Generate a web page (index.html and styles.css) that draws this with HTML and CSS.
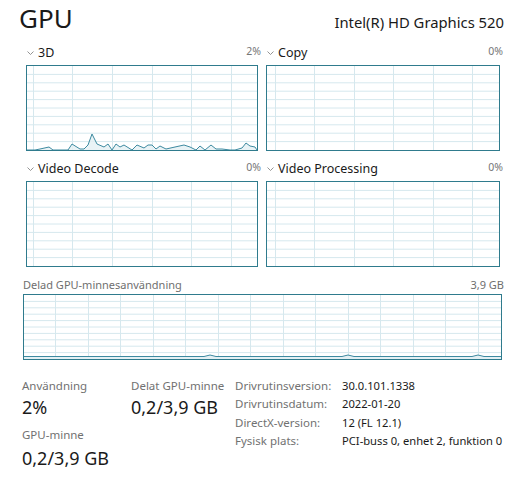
FILE: index.html
```html
<!DOCTYPE html>
<html lang="sv">
<head>
<meta charset="utf-8">
<title>GPU</title>
<link rel="stylesheet" href="styles.css">
</head>
<body>
<div class="page">
  <header class="top">
    <h1 class="title">GPU</h1>
    <div class="model">Intel(R) HD Graphics 520</div>
  </header>

  <section class="engines">
    <div class="panel">
      <div class="phead">
        <span class="pname"><svg class="chev" width="7" height="4" viewBox="0 0 7 4"><polyline points="0.5,0.5 3.5,3.5 6.5,0.5" fill="none" stroke="#888" stroke-width="0.9"/></svg>3D</span>
        <span class="pct">2%</span>
      </div>
      <div class="chart w232">
        <svg width="230" height="84" viewBox="0 0 230 84">
          <g stroke="#d6e8ee" stroke-width="1">
            <line x1="0" y1="8.4" x2="230" y2="8.4"/><line x1="0" y1="16.8" x2="230" y2="16.8"/><line x1="0" y1="25.2" x2="230" y2="25.2"/><line x1="0" y1="33.6" x2="230" y2="33.6"/><line x1="0" y1="42" x2="230" y2="42"/><line x1="0" y1="50.4" x2="230" y2="50.4"/><line x1="0" y1="58.8" x2="230" y2="58.8"/><line x1="0" y1="67.2" x2="230" y2="67.2"/><line x1="0" y1="75.6" x2="230" y2="75.6"/>
            <line x1="6.5" y1="0" x2="6.5" y2="84"/><line x1="45.5" y1="0" x2="45.5" y2="84"/><line x1="85.5" y1="0" x2="85.5" y2="84"/><line x1="125.5" y1="0" x2="125.5" y2="84"/><line x1="164.5" y1="0" x2="164.5" y2="84"/><line x1="204.5" y1="0" x2="204.5" y2="84"/>
          </g>
          <polygon fill="#e3f0f4" fill-opacity="0.8" points="0,84 8,84 13,83 22,81 26,84 41,84 45,78 53,83 57,83 61,79 65,68 70,78 77,81 81,78 85,84 89,78 93,81 97,79 105,84 110,79 117,82 121,79 125,79 129,83 133,80 139,83 148,81 157,79 163,81 169,84 173,80 178,84 184,79 189,83 195,83 203,84 208,84 215,82 219,77 223,80 228,81 230,84"/>
          <polyline fill="none" stroke="#3d8aa0" stroke-width="1" points="0,84 8,84 13,83 22,81 26,84 41,84 45,78 53,83 57,83 61,79 65,68 70,78 77,81 81,78 85,84 89,78 93,81 97,79 105,84 110,79 117,82 121,79 125,79 129,83 133,80 139,83 148,81 157,79 163,81 169,84 173,80 178,84 184,79 189,83 195,83 203,84 208,84 215,82 219,77 223,80 228,81 230,84"/>
        </svg>
      </div>
    </div>

    <div class="panel">
      <div class="phead">
        <span class="pname"><svg class="chev" width="7" height="4" viewBox="0 0 7 4"><polyline points="0.5,0.5 3.5,3.5 6.5,0.5" fill="none" stroke="#888" stroke-width="0.9"/></svg>Copy</span>
        <span class="pct">0%</span>
      </div>
      <div class="chart w234">
        <svg width="232" height="84" viewBox="0 0 232 84">
          <g stroke="#d6e8ee" stroke-width="1">
            <line x1="0" y1="8.4" x2="232" y2="8.4"/><line x1="0" y1="16.8" x2="232" y2="16.8"/><line x1="0" y1="25.2" x2="232" y2="25.2"/><line x1="0" y1="33.6" x2="232" y2="33.6"/><line x1="0" y1="42" x2="232" y2="42"/><line x1="0" y1="50.4" x2="232" y2="50.4"/><line x1="0" y1="58.8" x2="232" y2="58.8"/><line x1="0" y1="67.2" x2="232" y2="67.2"/><line x1="0" y1="75.6" x2="232" y2="75.6"/>
            <line x1="8.5" y1="0" x2="8.5" y2="84"/><line x1="47.5" y1="0" x2="47.5" y2="84"/><line x1="87.5" y1="0" x2="87.5" y2="84"/><line x1="126.5" y1="0" x2="126.5" y2="84"/><line x1="166.5" y1="0" x2="166.5" y2="84"/><line x1="205.5" y1="0" x2="205.5" y2="84"/>
          </g>
        </svg>
      </div>
    </div>

    <div class="panel">
      <div class="phead">
        <span class="pname"><svg class="chev" width="7" height="4" viewBox="0 0 7 4"><polyline points="0.5,0.5 3.5,3.5 6.5,0.5" fill="none" stroke="#888" stroke-width="0.9"/></svg>Video Decode</span>
        <span class="pct">0%</span>
      </div>
      <div class="chart w232">
        <svg width="230" height="84" viewBox="0 0 230 84">
          <g stroke="#d6e8ee" stroke-width="1">
            <line x1="0" y1="8.4" x2="230" y2="8.4"/><line x1="0" y1="16.8" x2="230" y2="16.8"/><line x1="0" y1="25.2" x2="230" y2="25.2"/><line x1="0" y1="33.6" x2="230" y2="33.6"/><line x1="0" y1="42" x2="230" y2="42"/><line x1="0" y1="50.4" x2="230" y2="50.4"/><line x1="0" y1="58.8" x2="230" y2="58.8"/><line x1="0" y1="67.2" x2="230" y2="67.2"/><line x1="0" y1="75.6" x2="230" y2="75.6"/>
            <line x1="6.5" y1="0" x2="6.5" y2="84"/><line x1="45.5" y1="0" x2="45.5" y2="84"/><line x1="85.5" y1="0" x2="85.5" y2="84"/><line x1="125.5" y1="0" x2="125.5" y2="84"/><line x1="164.5" y1="0" x2="164.5" y2="84"/><line x1="204.5" y1="0" x2="204.5" y2="84"/>
          </g>
        </svg>
      </div>
    </div>

    <div class="panel">
      <div class="phead">
        <span class="pname"><svg class="chev" width="7" height="4" viewBox="0 0 7 4"><polyline points="0.5,0.5 3.5,3.5 6.5,0.5" fill="none" stroke="#888" stroke-width="0.9"/></svg>Video Processing</span>
        <span class="pct">0%</span>
      </div>
      <div class="chart w234">
        <svg width="232" height="84" viewBox="0 0 232 84">
          <g stroke="#d6e8ee" stroke-width="1">
            <line x1="0" y1="8.4" x2="232" y2="8.4"/><line x1="0" y1="16.8" x2="232" y2="16.8"/><line x1="0" y1="25.2" x2="232" y2="25.2"/><line x1="0" y1="33.6" x2="232" y2="33.6"/><line x1="0" y1="42" x2="232" y2="42"/><line x1="0" y1="50.4" x2="232" y2="50.4"/><line x1="0" y1="58.8" x2="232" y2="58.8"/><line x1="0" y1="67.2" x2="232" y2="67.2"/><line x1="0" y1="75.6" x2="232" y2="75.6"/>
            <line x1="8.5" y1="0" x2="8.5" y2="84"/><line x1="47.5" y1="0" x2="47.5" y2="84"/><line x1="87.5" y1="0" x2="87.5" y2="84"/><line x1="126.5" y1="0" x2="126.5" y2="84"/><line x1="166.5" y1="0" x2="166.5" y2="84"/><line x1="205.5" y1="0" x2="205.5" y2="84"/>
          </g>
        </svg>
      </div>
    </div>
  </section>

  <section class="shared">
    <div class="shead">
      <span>Delad GPU-minnesanvändning</span>
      <span>3,9 GB</span>
    </div>
    <div class="chart w479">
      <svg width="477" height="64" viewBox="0 0 477 64">
        <g stroke="#d6e8ee" stroke-width="1">
          <line x1="0" y1="6.4" x2="477" y2="6.4"/><line x1="0" y1="12.8" x2="477" y2="12.8"/><line x1="0" y1="19.2" x2="477" y2="19.2"/><line x1="0" y1="25.6" x2="477" y2="25.6"/><line x1="0" y1="32" x2="477" y2="32"/><line x1="0" y1="38.4" x2="477" y2="38.4"/><line x1="0" y1="44.8" x2="477" y2="44.8"/><line x1="0" y1="51.2" x2="477" y2="51.2"/><line x1="0" y1="57.6" x2="477" y2="57.6"/>
          <line x1="31.5" y1="0" x2="31.5" y2="64"/><line x1="64.5" y1="0" x2="64.5" y2="64"/><line x1="96.5" y1="0" x2="96.5" y2="64"/><line x1="129.5" y1="0" x2="129.5" y2="64"/><line x1="161.5" y1="0" x2="161.5" y2="64"/><line x1="194.5" y1="0" x2="194.5" y2="64"/><line x1="226.5" y1="0" x2="226.5" y2="64"/><line x1="259.5" y1="0" x2="259.5" y2="64"/><line x1="291.5" y1="0" x2="291.5" y2="64"/><line x1="324.5" y1="0" x2="324.5" y2="64"/><line x1="356.5" y1="0" x2="356.5" y2="64"/><line x1="389.5" y1="0" x2="389.5" y2="64"/><line x1="421.5" y1="0" x2="421.5" y2="64"/><line x1="454.5" y1="0" x2="454.5" y2="64"/>
        </g>
        <polygon fill="#e3f0f4" points="0,61.5 180,61.5 186,60 192,61.5 318,61.5 324,60 330,61.5 448,61.5 454,60 460,61.5 477,61.5 477,64 0,64"/>
        <polyline fill="none" stroke="#3d8aa0" stroke-width="1" points="0,61.5 180,61.5 186,60 192,61.5 318,61.5 324,60 330,61.5 448,61.5 454,60 460,61.5 477,61.5"/>
      </svg>
    </div>
  </section>

  <section class="stats">
    <div class="col">
      <div class="slabel">Användning</div>
      <div class="sval">2%</div>
      <div class="slabel second">GPU-minne</div>
      <div class="sval second">0,2/3,9 GB</div>
    </div>
    <div class="col">
      <div class="slabel">Delat GPU-minne</div>
      <div class="sval">0,2/3,9 GB</div>
    </div>
    <dl class="info">
      <dt>Drivrutinsversion:</dt><dd>30.0.101.1338</dd>
      <dt>Drivrutinsdatum:</dt><dd>2022-01-20</dd>
      <dt>DirectX-version:</dt><dd>12 (FL 12.1)</dd>
      <dt>Fysisk plats:</dt><dd>PCI-buss 0, enhet 2, funktion 0</dd>
    </dl>
  </section>
</div>
</body>
</html>
```
FILE: styles.css
```css
* { box-sizing: border-box; }
html, body { margin: 0; padding: 0; background: #ffffff; }
body {
  font-family: "Noto Sans", "Open Sans", sans-serif;
  color: #1a1a1a;
  width: 519px;
  height: 486px;
  overflow: hidden;
}
.page { padding: 0; }

.top {
  height: 43px;
  display: flex;
  justify-content: space-between;
  align-items: baseline;
  padding: 3px 15px 0 19px;
}
.title {
  margin: 0;
  font-size: 26px;
  font-weight: 400;
  line-height: 30px;
}
.model {
  font-size: 14.8px;
  line-height: 20px;
}

.engines {
  display: grid;
  grid-template-columns: 232px 234px;
  column-gap: 8px;
  row-gap: 8px;
  margin-left: 26px;
}
.panel { display: flex; flex-direction: column; }
.phead {
  height: 16px;
  margin-bottom: 6px;
  margin-right: -3px;
  display: flex;
  justify-content: space-between;
  align-items: baseline;
  line-height: 16px;
}
.pname { font-size: 12.5px; display: flex; align-items: center; }
.chev { margin: 0 4px 0 1px; }
.pct { font-size: 10.5px; color: #767676; }

.chart {
  border: 1px solid #2f7b8d;
  background: #fff;
  line-height: 0;
}
.chart svg { display: block; }
.w232 { width: 232px; height: 86px; }
.w234 { width: 234px; height: 86px; }
.w479 { width: 479px; height: 66px; }

.shared {
  margin: 11px 0 0 23px;
  width: 481px;
}
.shead {
  display: flex;
  justify-content: space-between;
  font-size: 11px;
  line-height: 14px;
  color: #6f6f6f;
  margin-bottom: 2px;
}

.stats {
  margin: 18px 0 0 22px;
  display: grid;
  grid-template-columns: 109px 104px auto;
  align-items: start;
}
.slabel { font-size: 11.5px; line-height: 16px; color: #717171; }
.sval { font-size: 18px; line-height: 24px; margin-top: 1px; }
.slabel.second { margin-top: 8px; }
.sval.second { margin-top: 3px; }

.info {
  margin: -1px 0 0 0;
  display: grid;
  grid-template-columns: 107px auto;
  grid-auto-rows: 18.4px;
  align-content: start;
  font-size: 11.5px;
  line-height: 18.4px;
}
.info dt { color: #717171; }
.info dd { margin: 0; color: #1a1a1a; font-size: 11.2px; }
```
